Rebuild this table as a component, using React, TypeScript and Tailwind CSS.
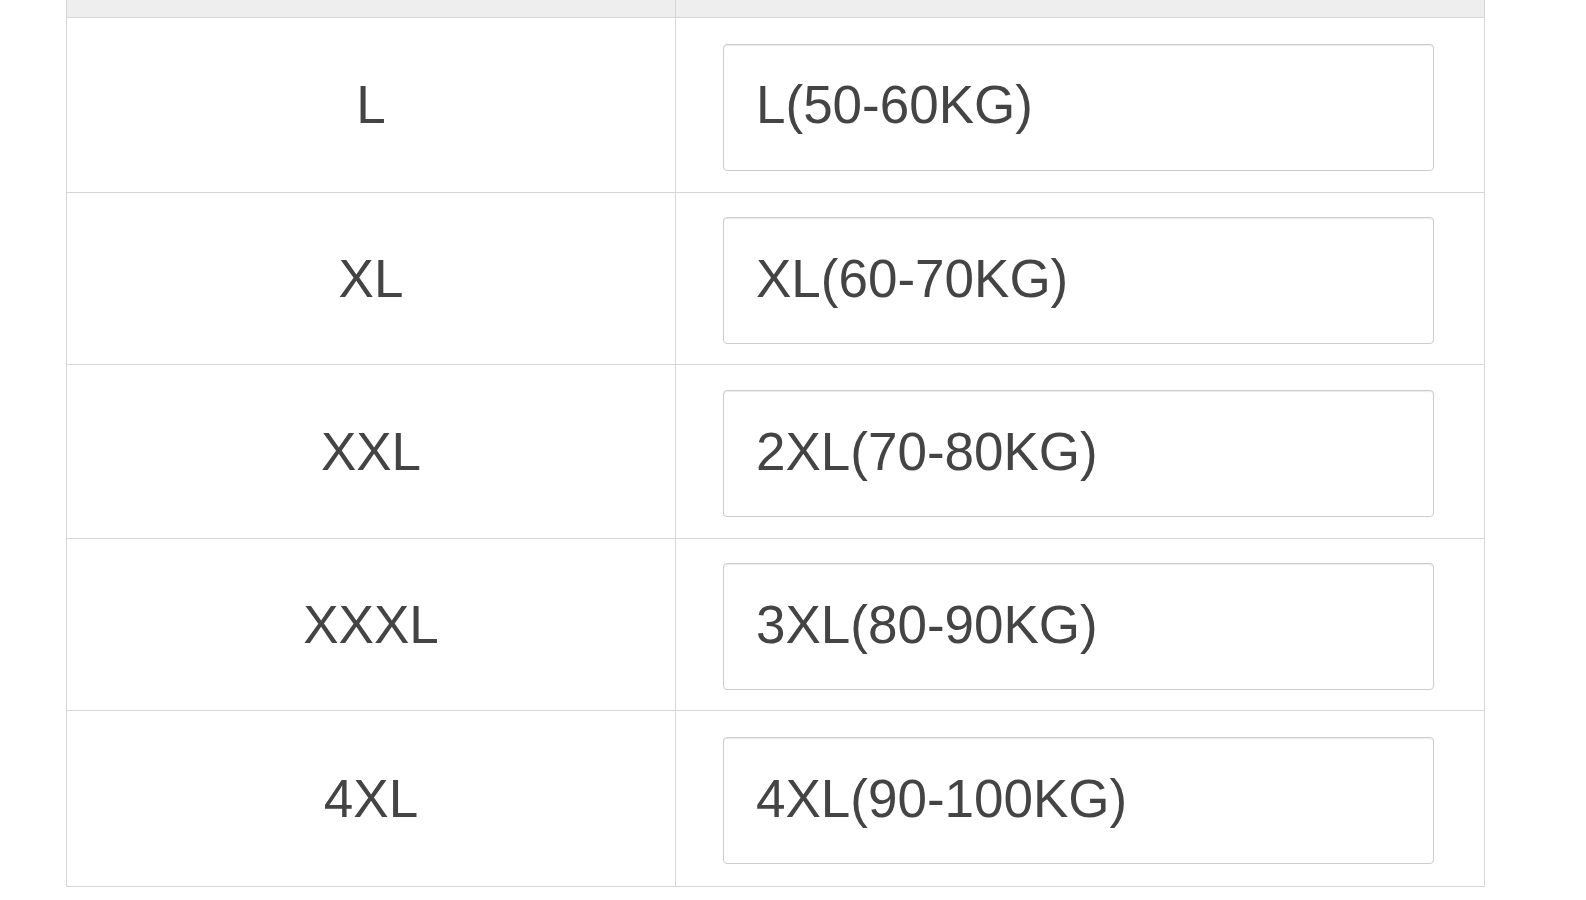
import React from "react";

const rows = [
  { size: "L", label: "L(50-60KG)", h: "h-[175px]" },
  { size: "XL", label: "XL(60-70KG)", h: "h-[172px]" },
  { size: "XXL", label: "2XL(70-80KG)", h: "h-[174px]" },
  { size: "XXXL", label: "3XL(80-90KG)", h: "h-[172px]" },
  { size: "4XL", label: "4XL(90-100KG)", h: "h-[175px]" },
];

export default function App() {
  return (
    <div
      className="min-h-[900px] w-full bg-white text-[#444444]"
      style={{ fontFamily: '"Liberation Sans", Arial, sans-serif' }}
    >
      <div className="ml-[66px] w-[1419px] border-x border-b border-[#d6d6d6]">
        {/* Header strip */}
        <div className="grid h-[18px] grid-cols-[609px_1fr] border-b border-[#d6d6d6] bg-[#eeeeee]">
          <div className="border-r border-[#d6d6d6]" />
          <div />
        </div>

        {rows.map((row, i) => (
          <div
            key={row.size}
            className={`grid grid-cols-[609px_1fr] ${row.h} ${
              i < rows.length - 1 ? "border-b border-[#d6d6d6]" : ""
            }`}
          >
            <div className="flex items-center justify-center border-r border-[#d6d6d6] text-[53px]">
              {row.size}
            </div>
            <div className="flex items-center pl-[47px] pr-[50px] pt-[4px]">
              <input
                readOnly
                value={row.label}
                className="h-[127px] w-full rounded-[4px] border border-[#cccccc] bg-white pb-[5px] pl-[32px] text-[53px] text-[#444444] shadow-[inset_0_1px_1px_rgba(0,0,0,0.075)] outline-none"
                style={{ fontFamily: '"Liberation Sans", Arial, sans-serif' }}
              />
            </div>
          </div>
        ))}
      </div>
    </div>
  );
}
